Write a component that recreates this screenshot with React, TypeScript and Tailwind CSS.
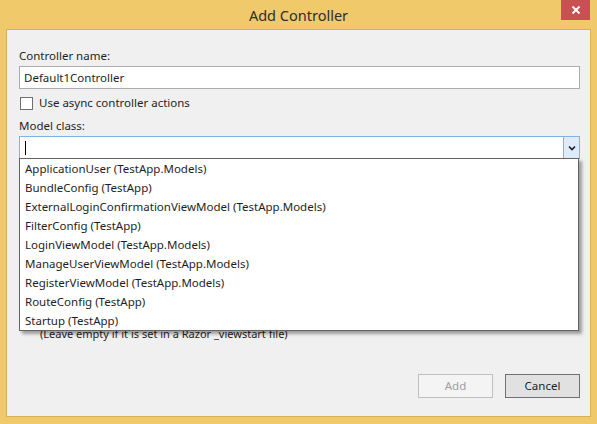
import React from "react";

const items = [
  "ApplicationUser (TestApp.Models)",
  "BundleConfig (TestApp)",
  "ExternalLoginConfirmationViewModel (TestApp.Models)",
  "FilterConfig (TestApp)",
  "LoginViewModel (TestApp.Models)",
  "ManageUserViewModel (TestApp.Models)",
  "RegisterViewModel (TestApp.Models)",
  "RouteConfig (TestApp)",
  "Startup (TestApp)",
];

export default function App() {
  return (
    <div className="w-[597px] h-[424px] bg-[#f0c96b] flex flex-col font-['Noto_Sans',sans-serif] text-[11.5px] text-[#1e1e1e] overflow-hidden">
      <div className="relative h-[29px] shrink-0 flex items-center justify-center">
        <span className="text-[14.5px] text-[#2e2e2e] leading-none mt-[1px]">Add Controller</span>
        <div className="absolute right-[7px] top-0 w-[29px] h-[20px] bg-[#c75050] flex items-center justify-center">
          <svg width="10" height="10" viewBox="0 0 10 10">
            <path d="M1.5 1.5 L8.5 8.5 M8.5 1.5 L1.5 8.5" stroke="#fff" strokeWidth="1.8" />
          </svg>
        </div>
      </div>
      <div className="relative ml-[6px] w-[585px] h-[388px] bg-[#f0f0f0] border border-[#d8ae58] pl-[12px] pr-[10px] flex flex-col">
        <div className="mt-[18px] h-[16px] leading-[16px]">Controller name:</div>
        <div className="mt-[2px] h-[23px] bg-white border border-[#abadb3] flex items-center pl-[4px] leading-none">
          Default1Controller
        </div>
        <div className="mt-[7px] h-[14px] flex items-center">
          <div className="w-[13px] h-[13px] bg-white border border-[#707070] ml-[1px]"></div>
          <span className="ml-[6px] leading-none">Use async controller actions</span>
        </div>
        <div className="mt-[8px] h-[16px] leading-[16px]">Model class:</div>
        <div className="mt-[2px] h-[23px] bg-white border border-[#7eb4ea] flex items-stretch">
          <div className="flex-1 flex items-center pl-[5px]">
            <div className="w-px h-[14px] bg-black"></div>
          </div>
          <div className="w-[16px] bg-[#dcecfc] border-l border-[#7eb4ea] flex items-center justify-center">
            <svg width="8" height="6" viewBox="0 0 8 6">
              <path d="M1 1.5 L4 4.5 L7 1.5" stroke="#1e1e1e" strokeWidth="1.6" fill="none" />
            </svg>
          </div>
        </div>
        <div className="mt-[167px] ml-[21px] h-[16px] leading-[16px] text-[11px]">(Leave empty if it is set in a Razor _viewstart file)</div>
        <div className="mt-[32px] flex justify-end gap-[12px]">
          <div className="w-[75px] h-[24px] border border-[#bfbfbf] bg-[#f4f4f4] text-[#a0a0a0] flex items-center justify-center">Add</div>
          <div className="w-[75px] h-[24px] border border-[#707070] bg-[#e1e1e1] flex items-center justify-center">Cancel</div>
        </div>

        <div className="absolute left-[12px] top-[128px] w-[560px] bg-white border border-[#646464] shadow-[3px_3px_3px_rgba(0,0,0,0.35)] flex flex-col">
          {items.map((t) => (
            <div key={t} className="h-[19px] flex items-center pl-[5px] leading-none whitespace-nowrap">
              {t}
            </div>
          ))}
        </div>
      </div>
    </div>
  );
}
